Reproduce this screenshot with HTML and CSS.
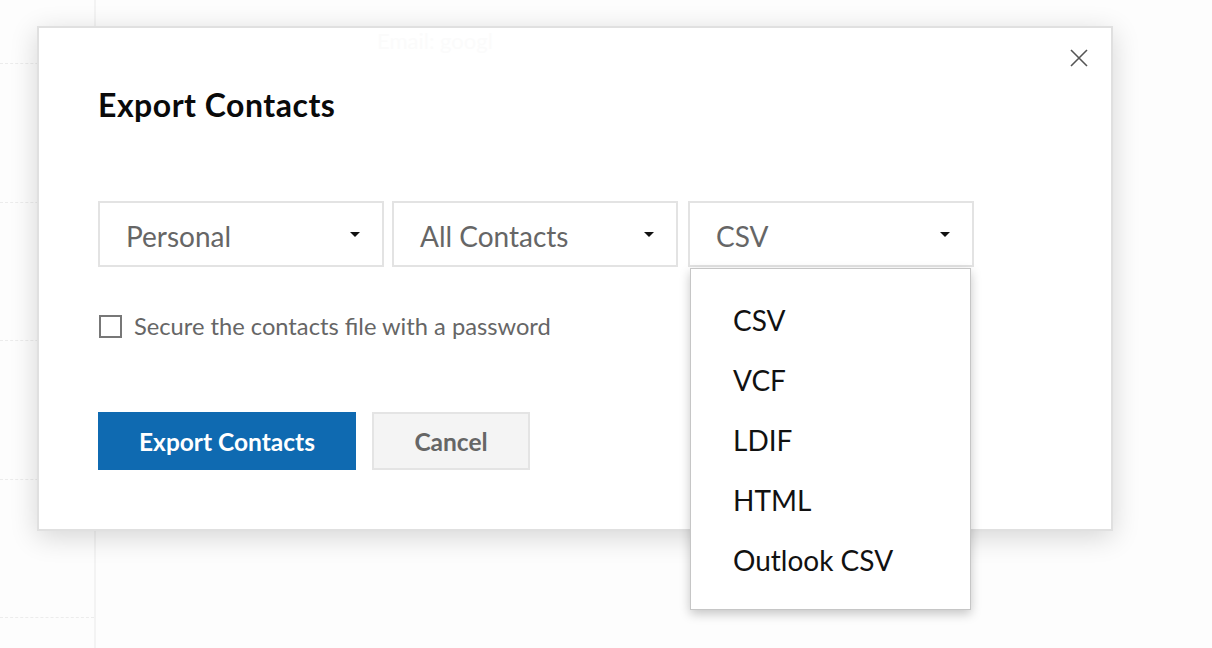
FILE: index.html
```html
<!DOCTYPE html>
<html>
<head>
<meta charset="utf-8">
<link rel="stylesheet" href="styles.css">
</head>
<body>
<div class="page">
  <div class="sidebar">
    <div class="row"></div>
    <div class="row"></div>
    <div class="row"></div>
    <div class="row"></div>
    <div class="row"></div>
  </div>
  <div class="main"></div>
</div>

<div class="modal">
  <div class="ghost">Email: googl</div>
  <button class="close" aria-label="Close">
    <svg width="18" height="18" viewBox="0 0 18 18"><path d="M1 1 L17 17 M17 1 L1 17" stroke="#555" stroke-width="1.6" fill="none"/></svg>
  </button>
  <h1 class="title">Export Contacts</h1>
  <div class="selects">
    <div class="select"><span>Personal</span><i class="caret"></i></div>
    <div class="select"><span>All Contacts</span><i class="caret"></i></div>
    <div class="select wide"><span>CSV</span><i class="caret"></i></div>
  </div>
  <label class="check"><span class="box"></span><span>Secure the contacts file with a password</span></label>
  <div class="actions">
    <button class="btn primary">Export Contacts</button>
    <button class="btn secondary">Cancel</button>
  </div>
</div>

<ul class="menu">
  <li>CSV</li>
  <li>VCF</li>
  <li>LDIF</li>
  <li>HTML</li>
  <li>Outlook CSV</li>
</ul>
</body>
</html>
```
FILE: styles.css
```css
* { box-sizing: border-box; }
html, body { margin: 0; padding: 0; }
body {
  width: 1212px;
  height: 648px;
  overflow: hidden;
  background: #fdfdfd;
  font-family: Lato, "Open Sans", "Liberation Sans", sans-serif;
}
.page {
  display: flex;
  height: 648px;
  overflow: hidden;
}
.sidebar {
  width: 96px;
  height: 648px;
  overflow: hidden;
  border-right: 2px solid #f3f3f3;
  padding-top: 63px;
  display: flex;
  flex-direction: column;
}
.sidebar .row {
  height: 138.5px;
  border-top: 1px dashed #ececec;
  flex: none;
}
.main { flex: 1; }

.modal {
  position: absolute;
  left: 37px;
  top: 26px;
  width: 1076px;
  height: 505px;
  background: #fff;
  border: 2px solid #e0e0e0;
  box-shadow: 0 6px 26px rgba(0,0,0,0.16);
  padding: 58px 59px 0;
}
.ghost {
  position: absolute;
  left: 338px;
  top: -1px;
  font-size: 22px;
  color: #fbfbfb;
}
.close {
  position: absolute;
  right: 21px;
  top: 19px;
  width: 22px;
  height: 22px;
  padding: 2px;
  border: 0;
  background: none;
  display: flex;
  align-items: center;
  justify-content: center;
}
.title {
  margin: 0;
  font-size: 32px;
  letter-spacing: 0.5px;
  line-height: 38px;
  font-weight: 700;
  color: #0a0a0a;
}
.selects {
  margin-top: 77px;
  display: flex;
  gap: 8px;
}
.select {
  width: 286px;
  height: 66px;
  border: 2px solid #e3e3e3;
  display: flex;
  align-items: center;
  justify-content: space-between;
  padding: 3px 22px 0 26px;
  font-size: 28px;
  color: #666;
}
.select.wide { margin-left: 2px; }
.caret {
  width: 0;
  height: 0;
  border-left: 5px solid transparent;
  border-right: 5px solid transparent;
  border-top: 5px solid #111;
  margin-top: -3px;
}
.check {
  margin-top: 45px;
  display: flex;
  align-items: center;
  gap: 12px;
  font-size: 23.7px;
  color: #666;
  height: 28px;
}
.box {
  width: 23px;
  height: 23px;
  border: 2px solid #777;
  margin-left: 1px;
}
.actions {
  margin-top: 72px;
  display: flex;
  gap: 16px;
}
.btn {
  height: 58px;
  font-family: Lato, "Open Sans", "Liberation Sans", sans-serif;
  font-size: 24.5px;
  font-weight: 700;
  border: 0;
  padding: 0;
}
.primary {
  width: 258px;
  background: #0f6ab1;
  color: #fff;
}
.secondary {
  width: 158px;
  background: #f4f4f4;
  border: 2px solid #e4e4e4;
  color: #666;
}

.menu {
  position: absolute;
  left: 690px;
  top: 268px;
  width: 281px;
  height: 342px;
  margin: 0;
  padding: 21px 0 0;
  list-style: none;
  background: #fff;
  border: 1px solid #c6c6c6;
  box-shadow: 0 4px 10px rgba(0,0,0,0.22);
}
.menu li {
  height: 60px;
  line-height: 60px;
  padding-left: 42px;
  font-size: 28px;
  color: #111;
}
```
